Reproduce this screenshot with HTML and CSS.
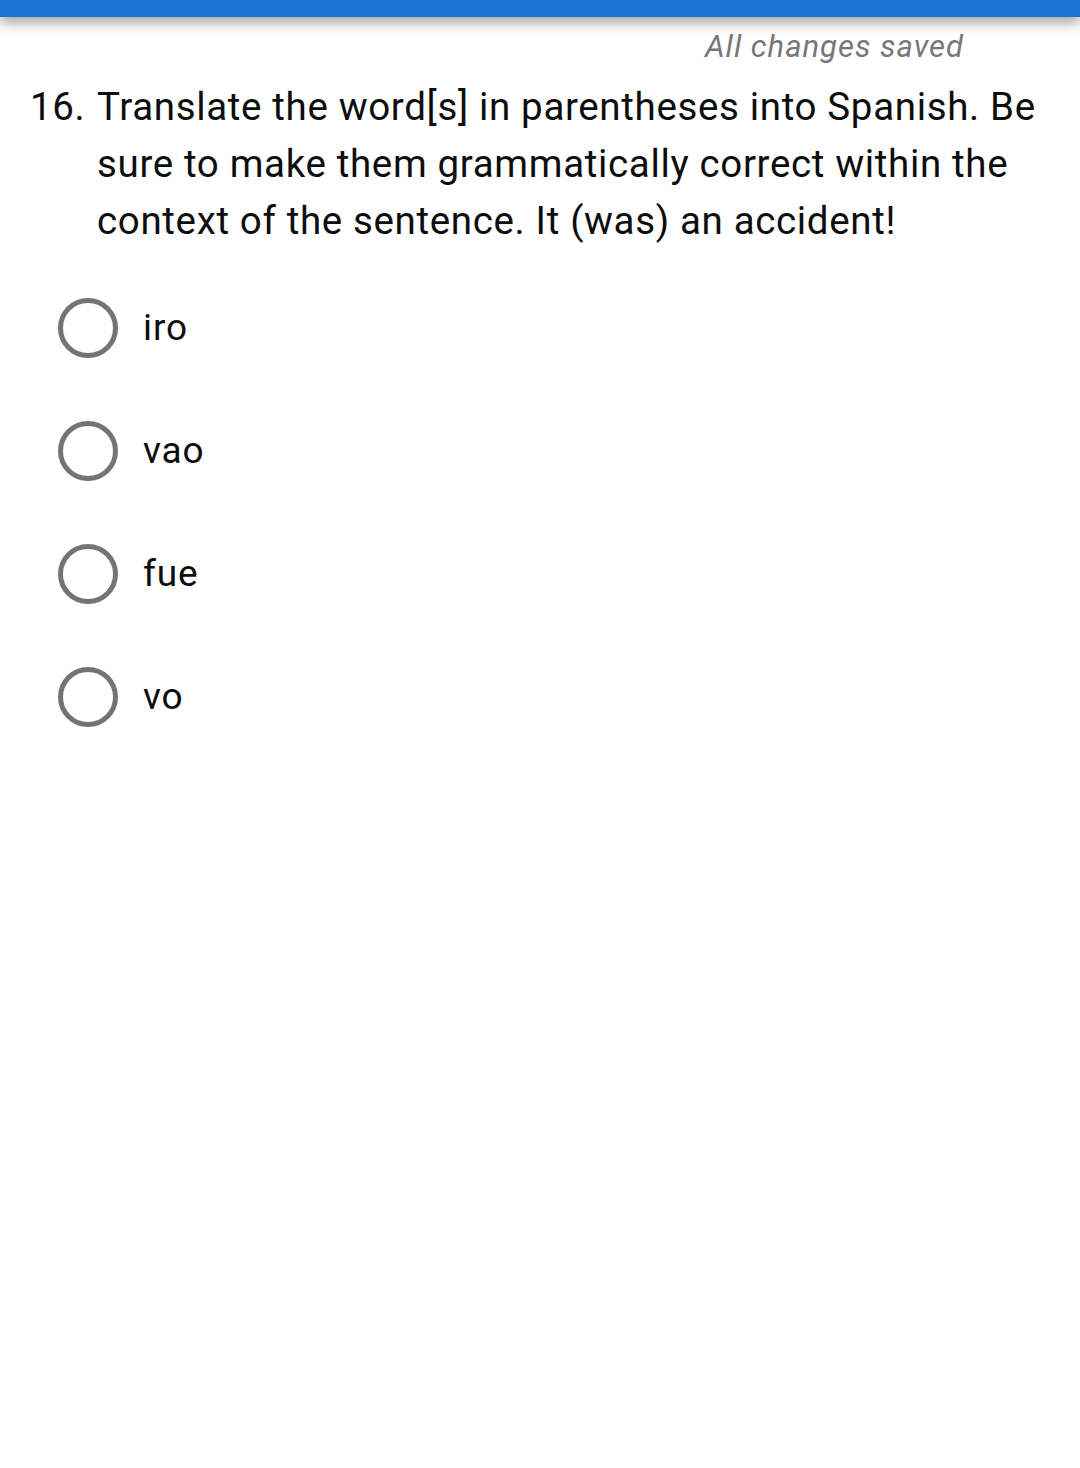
FILE: index.html
```html
<!DOCTYPE html>
<html>
<head>
<meta charset="utf-8">
<link rel="stylesheet" href="styles.css">
</head>
<body>
<div class="topbar"></div>
<div class="status">All changes saved</div>
<div class="question">
  <span class="qnum">16.</span>
  <span class="qtext">Translate the word[s] in parentheses into Spanish. Be sure to make them grammatically correct within the context of the sentence. It (was) an accident!</span>
</div>
<ul class="options">
  <li class="option"><span class="radio"></span><span class="label">iro</span></li>
  <li class="option"><span class="radio"></span><span class="label">vao</span></li>
  <li class="option"><span class="radio"></span><span class="label">fue</span></li>
  <li class="option"><span class="radio"></span><span class="label">vo</span></li>
</ul>
</body>
</html>
```
FILE: styles.css
```css
html, body {
  margin: 0;
  padding: 0;
  background: #ffffff;
  font-family: Roboto, "Liberation Sans", sans-serif;
  color: #0d0d0d;
}
.topbar {
  height: 17px;
  background: #1b74d2;
  box-shadow: 0 5px 14px rgba(0, 0, 0, 0.4);
  position: relative;
  z-index: 1;
}
.status {
  font-style: italic;
  font-size: 31px;
  letter-spacing: 1px;
  line-height: 40px;
  color: #777777;
  text-align: right;
  padding-right: 116px;
  margin-top: 10px;
}
.question {
  display: flex;
  padding-left: 30px;
  padding-right: 30px;
  margin-top: 11px;
  font-size: 38.5px;
  letter-spacing: 0.65px;
  line-height: 57px;
}
.qnum {
  flex: 0 0 67px;
}
.qtext {
  flex: 1;
}
.options {
  list-style: none;
  margin: 17px 0 0 0;
  padding: 0 0 0 58px;
}
.option {
  display: flex;
  align-items: center;
  height: 123px;
}
.radio {
  box-sizing: border-box;
  width: 60px;
  height: 60px;
  border: 5.5px solid #747474;
  border-radius: 50%;
  flex: 0 0 60px;
}
.label {
  margin-left: 25px;
  font-size: 37px;
  letter-spacing: 0.9px;
  color: #0d0d0d;
}
```
